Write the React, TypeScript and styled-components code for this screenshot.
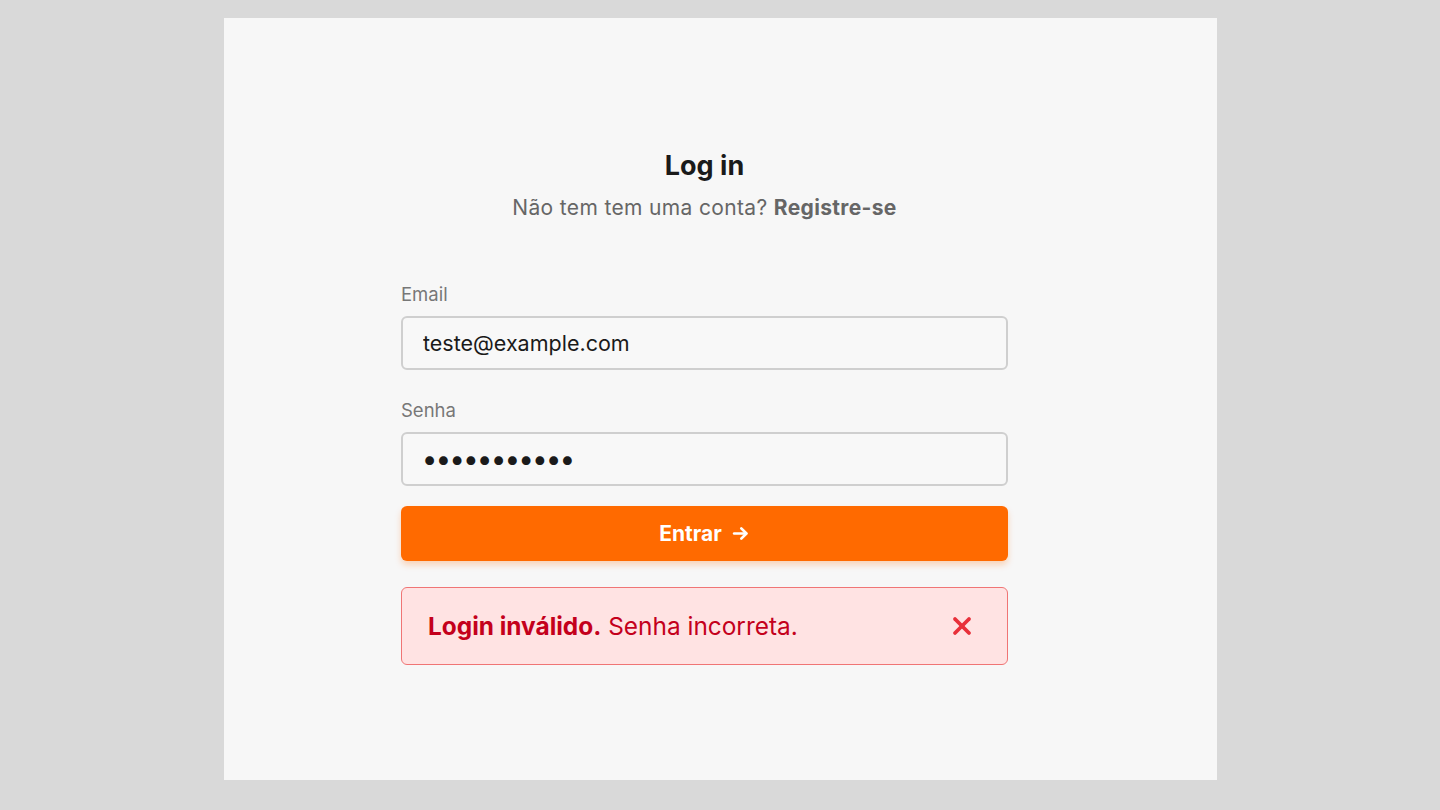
import React from 'react'
import styled, { createGlobalStyle } from 'styled-components'

const GlobalStyle = createGlobalStyle`
  html, body {
    margin: 0;
    padding: 0;
    background: #d9d9d9;
    font-family: Inter, "Noto Sans", "Liberation Sans", sans-serif;
  }
`

const Page = styled.div`
  width: 1440px;
  height: 810px;
  padding: 18px 0 0 224px;
  box-sizing: border-box;
`

const Panel = styled.div`
  width: 993px;
  height: 762px;
  background: #f7f7f7;
  padding: 132px 0 0 177px;
  box-sizing: border-box;
`

const Column = styled.div`
  width: 607px;
  display: flex;
  flex-direction: column;
`

const Title = styled.h1`
  margin: 0;
  font-size: 27px;
  line-height: 32px;
  font-weight: 700;
  color: #1a1a1a;
  text-align: center;
`

const Subtitle = styled.p`
  margin: 13px 0 0;
  font-size: 21px;
  line-height: 26px;
  letter-spacing: 0.35px;
  color: #666;
  text-align: center;

  b {
    font-weight: 700;
  }
`

const Form = styled.form`
  margin-top: 62px;
  display: flex;
  flex-direction: column;
`

const Label = styled.label<{ $gap?: number }>`
  font-size: 18.5px;
  line-height: 22px;
  color: #777;
  margin-top: ${(p) => p.$gap ?? 0}px;
`

const Input = styled.input`
  margin-top: 11px;
  height: 54px;
  box-sizing: border-box;
  border: 2px solid #cfcfcf;
  border-radius: 6px;
  background: #f8f8f8;
  padding: 0 20px;
  font-family: inherit;
  font-size: 21.5px;
  color: #1a1a1a;
  outline: none;

  &[type='password'] {
    font-size: 28px;
    font-weight: 700;
    letter-spacing: 0.5px;
  }
`

const Button = styled.button`
  margin-top: 20px;
  height: 55px;
  border: none;
  border-radius: 6px;
  background: #ff6a00;
  color: #fff;
  font-family: inherit;
  font-size: 21px;
  font-weight: 700;
  display: flex;
  align-items: center;
  justify-content: center;
  gap: 9px;
  box-shadow: 0 4px 6px rgba(255, 106, 0, 0.25);
  cursor: pointer;
`

const Alert = styled.div`
  margin-top: 26px;
  height: 78px;
  box-sizing: border-box;
  border: 1.5px solid #f07575;
  border-radius: 6px;
  background: #ffe3e3;
  display: flex;
  align-items: center;
  justify-content: space-between;
  padding: 0 35px 0 26px;
  color: #c4001c;
  font-size: 24.4px;

  b {
    font-weight: 700;
  }
`

const Close = styled.button`
  border: none;
  background: none;
  padding: 0;
  display: flex;
  cursor: pointer;
`

export default function App() {
  return (
    <>
      <GlobalStyle />
      <Page>
        <Panel>
          <Column>
            <Title>Log in</Title>
            <Subtitle>
              Não tem tem uma conta? <b>Registre-se</b>
            </Subtitle>
            <Form onSubmit={(e) => e.preventDefault()}>
              <Label>Email</Label>
              <Input type="email" defaultValue="teste@example.com" />
              <Label $gap={29}>Senha</Label>
              <Input type="password" defaultValue="12345678901" />
              <Button type="submit">
                Entrar
                <svg width="19" height="19" viewBox="0 0 24 24" fill="none" stroke="#fff" strokeWidth="3.4" strokeLinecap="round" strokeLinejoin="round">
                  <path d="M4 12h15" />
                  <path d="M13 5.5l6.5 6.5-6.5 6.5" />
                </svg>
              </Button>
              <Alert>
                <span>
                  <b>Login inválido.</b> Senha incorreta.
                </span>
                <Close type="button" aria-label="Fechar">
                  <svg width="20" height="20" viewBox="0 0 20 20" fill="none" stroke="#e8303a" strokeWidth="3.8" strokeLinecap="round">
                    <path d="M3 3l14 14" />
                    <path d="M17 3L3 17" />
                  </svg>
                </Close>
              </Alert>
            </Form>
          </Column>
        </Panel>
      </Page>
    </>
  )
}
